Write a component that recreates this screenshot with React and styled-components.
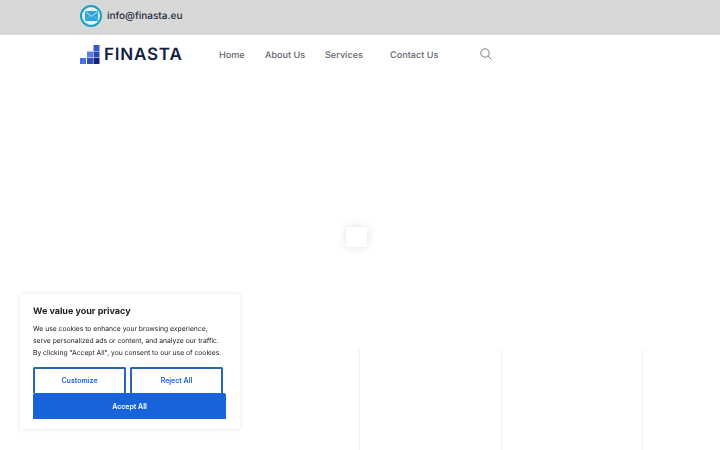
import styled, { createGlobalStyle } from 'styled-components';

const GlobalStyle = createGlobalStyle`
    html, body {
        margin: 0;
        height: 100%;
        overflow: hidden;
        background: #fff;
        font-family: "Inter", "Liberation Sans", sans-serif;
        text-rendering: geometricPrecision;
    }
    * { box-sizing: border-box; }
`;

const Page = styled.div`
    width: 720px;
    height: 450px;
    overflow: hidden;
    display: flex;
    flex-direction: column;
`;

const TopBar = styled.div`
    height: 35px;
    background: #d8d8d8;
    padding: 0 0 4px 80px;
    display: flex;
    align-items: center;
    gap: 5px;
`;

const MailBadge = styled.span`
    width: 22px;
    height: 22px;
    border-radius: 50%;
    border: 2px solid #14a3c7;
    background: #e9eff2;
    display: flex;
    align-items: center;
    justify-content: center;
`;

const MailAddress = styled.span`
    padding-top: 1px;
    font-size: 10px;
    font-weight: 500;
    color: #232c3f;
`;

const Nav = styled.nav`
    height: 39px;
    padding: 0 0 0 80px;
    display: flex;
    align-items: center;
`;

const Logo = styled.div`
    width: 139px;
    display: flex;
    align-items: center;
    gap: 4px;
`;

const LogoText = styled.span`
    font-size: 17px;
    font-weight: 600;
    letter-spacing: 0.8px;
    color: #10203f;
`;

const NavLinks = styled.div`
    display: flex;
    align-items: center;
    padding-top: 1px;
`;

const NavLink = styled.a`
    width: ${(p) => p.$w}px;
    font-size: 9.1px;
    font-weight: 500;
    color: #5f6670;
`;

const SearchButton = styled.span`
    display: flex;
    margin-top: -3px;
`;

const Lines = styled.div`
    flex: 1;
    margin: 275px 0 0 359px;
    display: flex;
`;

const LineColumn = styled.div`
    width: ${(p) => p.$w}px;
    border-left: 1px solid #f0f0f0;
`;

const Loader = styled.div`
    position: fixed;
    left: 346px;
    top: 227px;
    width: 21px;
    height: 20px;
    background: #fff;
    box-shadow: 0 0 10px rgba(0, 0, 0, 0.12);
`;

const CookieBanner = styled.div`
    position: fixed;
    left: 20px;
    top: 294px;
    width: 220px;
    height: 135px;
    padding: 11px 13px;
    background: #fff;
    border-radius: 2px;
    box-shadow: 0 0 5px rgba(0, 0, 0, 0.11);
`;

const CookieTitle = styled.h2`
    margin: 0 0 5px;
    font-size: 9px;
    line-height: 13px;
    font-weight: 700;
    color: #212121;
`;

const CookieText = styled.p`
    margin: 0 0 8px;
    font-size: 6.75px;
    line-height: 12px;
    color: #212121;
    white-space: nowrap;
`;

const CookieButtons = styled.div`
    display: flex;
    flex-wrap: wrap;
    column-gap: 4px;
    width: 193px;
`;

const CookieButton = styled.button`
    width: ${(p) => (p.$primary ? '193px' : '93px')};
    height: 26px;
    margin: 0;
    padding: ${(p) => (p.$primary ? '0' : '0 0 2px')};
    font-family: inherit;
    font-size: 7px;
    font-weight: 600;
    color: ${(p) => (p.$primary ? '#fff' : '#1863dc')};
    background: ${(p) => (p.$primary ? '#1863dc' : '#fff')};
    border: ${(p) => (p.$primary ? 'none' : '2px solid #2a66b8')};
    border-bottom: none;
    border-radius: 2px 2px 0 0;
`;

const App = () => {
    return (
        <Page>
            <GlobalStyle />
            <TopBar>
                <MailBadge>
                    <svg width="13" height="10" viewBox="0 0 13 10">
                        <rect width="13" height="10" rx="1" fill="#2ba3dd" />
                        <path d="M1 1.2 6.5 5.4 12 1.2" fill="none" stroke="#dff1fa" strokeWidth="0.9" />
                        <path d="M1 9 4.4 4.6M12 9 8.6 4.6" fill="none" stroke="#8fd0ee" strokeWidth="0.6" />
                    </svg>
                </MailBadge>
                <MailAddress>info@finasta.eu</MailAddress>
            </TopBar>
            <Nav>
                <Logo>
                    <svg width="20" height="19" viewBox="0 0 20 19">
                        <rect x="13.5" y="0" width="6" height="6" fill="#3659c4" />
                        <rect x="7" y="6.5" width="6" height="6" fill="#5b7fe0" />
                        <rect x="13.5" y="6.5" width="6" height="6" fill="#2a48ad" />
                        <rect x="0" y="13" width="6" height="6" fill="#4a72e6" />
                        <rect x="7" y="13" width="6" height="6" fill="#2c50b8" />
                        <rect x="13.5" y="13" width="6" height="6" fill="#141f80" />
                    </svg>
                    <LogoText>FINASTA</LogoText>
                </Logo>
                <NavLinks>
                    <NavLink $w={46}>Home</NavLink>
                    <NavLink $w={60}>About Us</NavLink>
                    <NavLink $w={65}>Services</NavLink>
                    <NavLink $w={90}>Contact Us</NavLink>
                    <SearchButton>
                        <svg width="12" height="12" viewBox="0 0 12 12" fill="none" stroke="#6d7279" strokeWidth="0.9">
                            <circle cx="5" cy="5" r="4.2" />
                            <path d="M8 8l3.4 3.4" />
                        </svg>
                    </SearchButton>
                </NavLinks>
            </Nav>
            <Lines>
                <LineColumn $w={142} />
                <LineColumn $w={141} />
                <LineColumn $w={78} />
            </Lines>
            <Loader />
            <CookieBanner>
                <CookieTitle>We value your privacy</CookieTitle>
                <CookieText>
                    We use cookies to enhance your browsing experience,
                    <br />
                    serve personalized ads or content, and analyze our traffic.
                    <br />
                    By clicking "Accept All", you consent to our use of cookies.
                </CookieText>
                <CookieButtons>
                    <CookieButton>Customize</CookieButton>
                    <CookieButton>Reject All</CookieButton>
                    <CookieButton $primary>Accept All</CookieButton>
                </CookieButtons>
            </CookieBanner>
        </Page>
    );
};

export default App;
